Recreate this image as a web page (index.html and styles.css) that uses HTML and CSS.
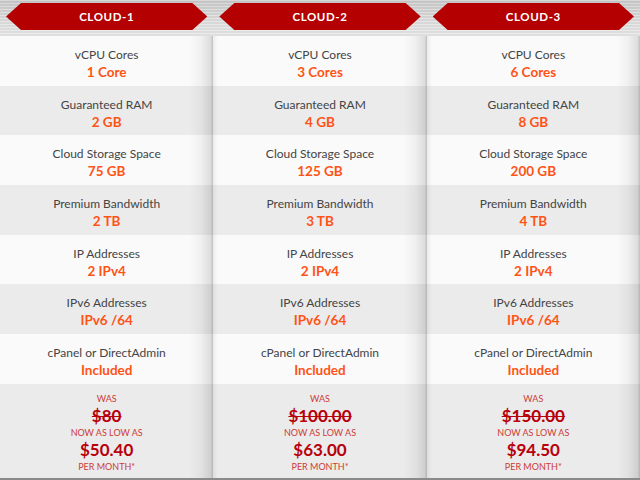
FILE: index.html
```html
<!DOCTYPE html>
<html>
<head>
<meta charset="utf-8">
<link rel="stylesheet" href="styles.css">
</head>
<body>
<div class="table">
  <div class="col">
    <div class="head"><div class="banner">CLOUD-1</div></div>
    <div class="row light"><div class="label">vCPU Cores</div><div class="value">1 Core</div></div>
    <div class="row dark"><div class="label">Guaranteed RAM</div><div class="value">2 GB</div></div>
    <div class="row light"><div class="label">Cloud Storage Space</div><div class="value">75 GB</div></div>
    <div class="row dark"><div class="label">Premium Bandwidth</div><div class="value">2 TB</div></div>
    <div class="row light"><div class="label">IP Addresses</div><div class="value">2 IPv4</div></div>
    <div class="row dark"><div class="label">IPv6 Addresses</div><div class="value">IPv6 /64</div></div>
    <div class="row light"><div class="label">cPanel or DirectAdmin</div><div class="value">Included</div></div>
    <div class="price">
      <div class="small">WAS</div>
      <div class="old">$80</div>
      <div class="small">NOW AS LOW AS</div>
      <div class="new">$50.40</div>
      <div class="small">PER MONTH*</div>
    </div>
  </div>
  <div class="col">
    <div class="head"><div class="banner">CLOUD-2</div></div>
    <div class="row light"><div class="label">vCPU Cores</div><div class="value">3 Cores</div></div>
    <div class="row dark"><div class="label">Guaranteed RAM</div><div class="value">4 GB</div></div>
    <div class="row light"><div class="label">Cloud Storage Space</div><div class="value">125 GB</div></div>
    <div class="row dark"><div class="label">Premium Bandwidth</div><div class="value">3 TB</div></div>
    <div class="row light"><div class="label">IP Addresses</div><div class="value">2 IPv4</div></div>
    <div class="row dark"><div class="label">IPv6 Addresses</div><div class="value">IPv6 /64</div></div>
    <div class="row light"><div class="label">cPanel or DirectAdmin</div><div class="value">Included</div></div>
    <div class="price">
      <div class="small">WAS</div>
      <div class="old">$100.00</div>
      <div class="small">NOW AS LOW AS</div>
      <div class="new">$63.00</div>
      <div class="small">PER MONTH*</div>
    </div>
  </div>
  <div class="col">
    <div class="head"><div class="banner">CLOUD-3</div></div>
    <div class="row light"><div class="label">vCPU Cores</div><div class="value">6 Cores</div></div>
    <div class="row dark"><div class="label">Guaranteed RAM</div><div class="value">8 GB</div></div>
    <div class="row light"><div class="label">Cloud Storage Space</div><div class="value">200 GB</div></div>
    <div class="row dark"><div class="label">Premium Bandwidth</div><div class="value">4 TB</div></div>
    <div class="row light"><div class="label">IP Addresses</div><div class="value">2 IPv4</div></div>
    <div class="row dark"><div class="label">IPv6 Addresses</div><div class="value">IPv6 /64</div></div>
    <div class="row light"><div class="label">cPanel or DirectAdmin</div><div class="value">Included</div></div>
    <div class="price">
      <div class="small">WAS</div>
      <div class="old">$150.00</div>
      <div class="small">NOW AS LOW AS</div>
      <div class="new">$94.50</div>
      <div class="small">PER MONTH*</div>
    </div>
  </div>
</div>
</body>
</html>
```
FILE: styles.css
```css
html, body {
  margin: 0;
  padding: 0;
  width: 640px;
  height: 480px;
  overflow: hidden;
  background: #e9e9e9;
  font-family: Lato, "Open Sans", sans-serif;
}
.table {
  display: grid;
  grid-template-columns: repeat(3, 1fr);
  height: 478px;
  border-bottom: 2px solid #8a8a8a;
}
.col {
  position: relative;
  display: flex;
  flex-direction: column;
}
.col::after {
  content: "";
  position: absolute;
  right: 0;
  top: 36px;
  bottom: 0;
  width: 24px;
  background: linear-gradient(to right, rgba(0,0,0,0) 0%, rgba(0,0,0,0.04) 50%, rgba(0,0,0,0.12) 92%, rgba(0,0,0,0.22) 96%, rgba(0,0,0,0.2) 100%);
  pointer-events: none;
}
.col + .col::before {
  content: "";
  position: absolute;
  left: 0;
  top: 36px;
  bottom: 0;
  width: 5px;
  background: linear-gradient(to right, rgba(0,0,0,0.06), rgba(0,0,0,0));
  pointer-events: none;
}
.head {
  height: 36px;
  box-sizing: border-box;
  padding: 3px 6px 0;
  background:
    repeating-linear-gradient(to bottom, rgba(255,255,255,0.25) 0 1px, rgba(0,0,0,0.03) 1px 3px),
    linear-gradient(to bottom, #c9c9c9, #dedede 60%, #e6e6e6);
}
.banner {
  height: 27px;
  background: #b40000;
  clip-path: polygon(15px 0, calc(100% - 15px) 0, 100% 50%, calc(100% - 15px) 100%, 15px 100%, 0 50%);
  color: #fff;
  font-weight: 700;
  font-size: 11.5px;
  letter-spacing: 0.6px;
  display: flex;
  align-items: center;
  justify-content: center;
}
.row {
  height: 49.7px;
  box-sizing: border-box;
  padding-top: 10px;
  text-align: center;
}
.light { background: #fafafa; }
.dark { background: #ebebeb; }
.label {
  font-size: 12px;
  line-height: 18px;
  color: #444;
}
.value {
  font-size: 13.5px;
  line-height: 17px;
  font-weight: 700;
  color: #ff5316;
}
.price {
  flex: 1;
  background: #ebebeb;
  text-align: center;
  padding-top: 8px;
}
.small {
  font-size: 9px;
  line-height: 13px;
  color: #cc3b36;
  text-transform: uppercase;
}
.old, .new {
  font-size: 17px;
  line-height: 21px;
  font-weight: 700;
  color: #b8000a;
}
.old {
  text-decoration: line-through;
  text-decoration-thickness: 1px;
}
```
